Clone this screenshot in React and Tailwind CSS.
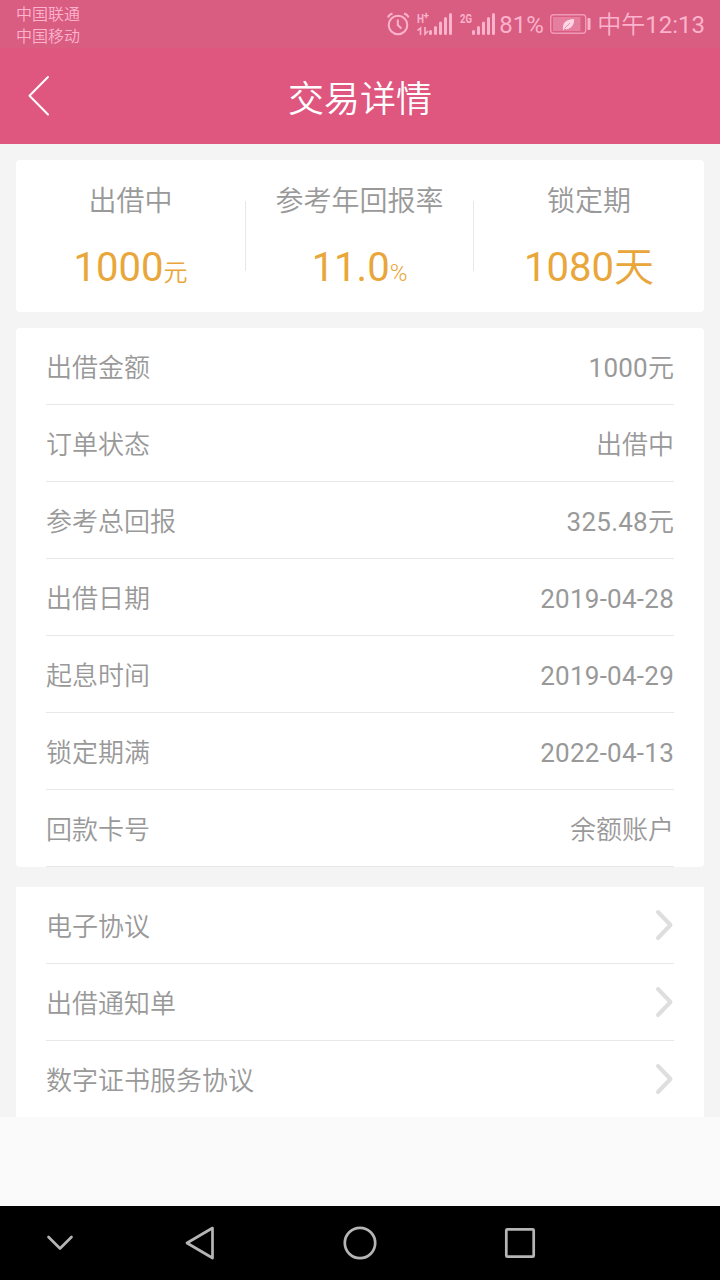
import React from "react";

const SUMMARY = [
  { label: "出借中", value: "1000", unit: "元" },
  { label: "参考年回报率", value: "11.0", unit: "%" },
  { label: "锁定期", value: "1080", bigUnit: "天" },
];

const DETAILS = [
  ["出借金额", "1000", "元"],
  ["订单状态", "", "出借中"],
  ["参考总回报", "325.48", "元"],
  ["出借日期", "2019-04-28"],
  ["起息时间", "2019-04-29"],
  ["锁定期满", "2022-04-13"],
  ["回款卡号", "", "余额账户"],
];

const LINKS = ["电子协议", "出借通知单", "数字证书服务协议"];

function StatusBar() {
  return (
    <div className="flex h-12 justify-between bg-[#d95c81] text-[#fbb3cd]">
      <div className="pt-1 pl-4 text-base leading-[22px] font-[350]">
        <p>中国联通</p>
        <p>中国移动</p>
      </div>
      <div className="flex pr-[15px]">
        <svg width="112" height="48" viewBox="-1 0 112 48" fill="none" stroke="currentColor">
          {/* alarm clock */}
          <circle cx="11" cy="25" r="9.3" strokeWidth="2" />
          <path d="M10.800 19.500v5.500l3.500 3.500" strokeWidth="2" />
          <path d="M1 17.500q1-3 4.500-4M21.500 17.500q-1-3-4.500-4" strokeWidth="2" />
          {/* data arrows */}
          <path d="M30.500 30.500l3-2.500v7M38 27v7l3-3" strokeWidth="1.600" />
          {/* signal bars, both SIMs */}
          <path
            d="M43.500 31.500v2M48.500 27.500v6M53.500 23v10.500M58.500 18.500v15M63.500 14.500v19M86.500 31.500v2M91.500 27.500v6M96.500 23v10.500M101.500 18.500v15M106.500 14.500v19"
            strokeWidth="3"
            strokeLinecap="round"
          />
          <g fill="currentColor" stroke="none" className="font-bold">
            <text x="30" y="22.500" fontSize="13" textLength="7" lengthAdjust="spacingAndGlyphs">H</text>
            <text x="36.500" y="19" fontSize="10">+</text>
            <text x="73" y="22.500" fontSize="13" textLength="12" lengthAdjust="spacingAndGlyphs">2G</text>
          </g>
        </svg>
        <span className="w-[51px] pl-px text-2xl leading-[51px]">81%</span>
        <svg width="42" height="48" viewBox="-1 0 42 48" fill="none">
          <rect x="0.700" y="14.700" width="35" height="18.600" rx="3" stroke="#f09ab7" strokeWidth="1.400" />
          <rect x="3" y="17" width="27.500" height="14" fill="#e67f9f" />
          <rect x="37.500" y="18" width="3" height="12" rx="1" fill="#fbb3cd" />
          <path d="M13 29.500c-1-7 4-10.500 11-10.500 .5 6-3 11-9.500 10l-1.500 1.500z" fill="#ffd6e4" />
          <path d="M14.500 28.500l5.500-5.500" stroke="#e67f9f" strokeWidth="0.800" />
        </svg>
        <span className="ml-[6px] text-2xl leading-[51px]">
          <span className="font-[350]">中午</span>12:13
        </span>
      </div>
    </div>
  );
}

function Header() {
  return (
    <header className="grid h-24 grid-cols-[1fr_auto_1fr] items-center bg-[#df577f] text-white">
      <svg className="ml-7" width="24" height="42" viewBox="0 0 24 42" fill="none" stroke="currentColor" strokeWidth="2" strokeLinecap="round" strokeLinejoin="round">
        <path d="M20 2L1.500 20.800L20 39.500" />
      </svg>
      <h1 className="pt-2 text-4xl leading-[88px] font-[350]">交易详情</h1>
    </header>
  );
}

function Summary() {
  return (
    <section className="grid h-[152px] grid-cols-[229px_1px_227px_1px_230px] items-center rounded bg-white">
      {SUMMARY.map((item, i) => (
        <React.Fragment key={item.label}>
          {i > 0 && <div className="h-[70px] w-px bg-[#e8e8e8]" />}
          <div className="pt-[5px] text-center">
            <p className="text-[28px] leading-[40px] font-[350]">{item.label}</p>
            <p className="mt-[18px] text-[40px] leading-[56px] text-[#e9a63a]">
              {item.value}
              {item.unit && <span className="text-2xl leading-none font-[350]">{item.unit}</span>}
              {item.bigUnit && <span className="font-[350]">{item.bigUnit}</span>}
            </p>
          </div>
        </React.Fragment>
      ))}
    </section>
  );
}

function Details() {
  return (
    <section className="mt-4 rounded bg-white px-[30px]">
      {DETAILS.map(([label, number, text]) => (
        <div key={label} className="flex h-[77px] items-center justify-between border-b border-[#e8e8e8] pt-1">
          <span className="font-[350]">{label}</span>
          <span>
            <span className="tracking-[0.25px]">{number}</span>
            <span className="font-[350]">{text}</span>
          </span>
        </div>
      ))}
    </section>
  );
}

function Links() {
  return (
    <section className="mt-5 bg-white px-[30px]">
      {LINKS.map((label) => (
        <div key={label} className="flex h-[77px] items-center justify-between border-b border-[#e8e8e8] last:h-[76px] last:border-0">
          <span className="pt-[5px] font-[350]">{label}</span>
          <svg width="20" height="32" viewBox="0 0 20 32" fill="none" stroke="#dedede" strokeWidth="4" strokeLinecap="round" strokeLinejoin="round">
            <path d="M4 3L16.500 16L4 29" />
          </svg>
        </div>
      ))}
    </section>
  );
}

function NavBar() {
  return (
    <nav className="flex h-[74px] items-center bg-black pl-[40px] text-[#b5b5b5]">
      <svg width="520" height="74" viewBox="40 0 520 74" fill="none" stroke="currentColor" strokeWidth="2.700" strokeLinecap="round" strokeLinejoin="round">
        <path d="M48.500 31L60 42.500L71.500 31" />
        <path d="M212.500 22L187 37L212.500 52Z" />
        <circle cx="360" cy="37" r="15.200" />
        <rect x="506.300" y="23.300" width="27.400" height="27.400" rx="1" />
      </svg>
    </nav>
  );
}

export default function App() {
  return (
    <div className="flex h-[1280px] w-[720px] flex-col overflow-hidden bg-[#fafafa] font-[Roboto,'Noto_Sans_CJK_SC',sans-serif]">
      <StatusBar />
      <Header />
      <main className="flex-1">
        <div className="bg-[#f4f4f4] px-4 pt-4 text-[26px] text-[#999]">
          <Summary />
          <Details />
          <Links />
        </div>
      </main>
      <NavBar />
    </div>
  );
}
